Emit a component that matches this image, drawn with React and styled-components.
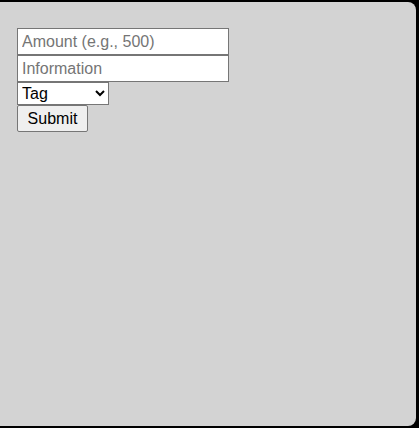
import React from "react";
import styled, { createGlobalStyle } from "styled-components";

const GlobalStyle = createGlobalStyle`
  html, body {
    margin: 0;
    padding: 0;
    background: #000;
  }
  body {
    font-family: "Liberation Sans", Arial, sans-serif;
  }
`;

function App() {
  return (
    <>
      <GlobalStyle />
      <Page>
        <Panel>
          <Form onSubmit={(e) => e.preventDefault()}>
            <Field type="number" placeholder="Amount (e.g., 500)" />
            <Field type="text" placeholder="Information" />
            <TagSelect defaultValue="">
              <option value="">Tag</option>
              <option value="food">Food</option>
              <option value="rent">Rent</option>
              <option value="other">Other</option>
            </TagSelect>
            <SubmitButton type="submit">Submit</SubmitButton>
          </Form>
        </Panel>
      </Page>
    </>
  );
}

export default App;

const Page = styled.div`
  width: 419px;
  height: 428px;
  padding: 2px 3px 2px 0;
  box-sizing: border-box;
  display: flex;
`;

const Panel = styled.div`
  flex: 1;
  background: #d3d3d3;
  border-radius: 0 8px 8px 0;
  padding: 26px 17px;
`;

const Form = styled.form`
  display: flex;
  flex-direction: column;
  align-items: flex-start;
`;

const Field = styled.input`
  width: 212px;
  height: 27px;
  box-sizing: border-box;
  margin: 0;
  padding: 2px 4px;
  border: 1px solid #767676;
  border-radius: 0;
  background: #fff;
  font-family: "Liberation Sans", Arial, sans-serif;
  font-size: 16px;
  color: #000;
  outline: none;

  &::placeholder {
    color: #757575;
  }

  &::-webkit-outer-spin-button,
  &::-webkit-inner-spin-button {
    -webkit-appearance: none;
    margin: 0;
  }
  -moz-appearance: textfield;
`;

const TagSelect = styled.select`
  width: 92px;
  height: 23px;
  box-sizing: border-box;
  margin: 0;
  border: 1px solid #767676;
  border-radius: 0;
  background: #fff;
  font-family: "Liberation Sans", Arial, sans-serif;
  font-size: 16px;
  color: #000;
`;

const SubmitButton = styled.button`
  width: 71px;
  height: 27px;
  box-sizing: border-box;
  margin: 0;
  padding: 1px 6px;
  border: 1px solid #767676;
  border-radius: 2px;
  background: #efefef;
  font-family: "Liberation Sans", Arial, sans-serif;
  font-size: 16px;
  color: #000;
`;
